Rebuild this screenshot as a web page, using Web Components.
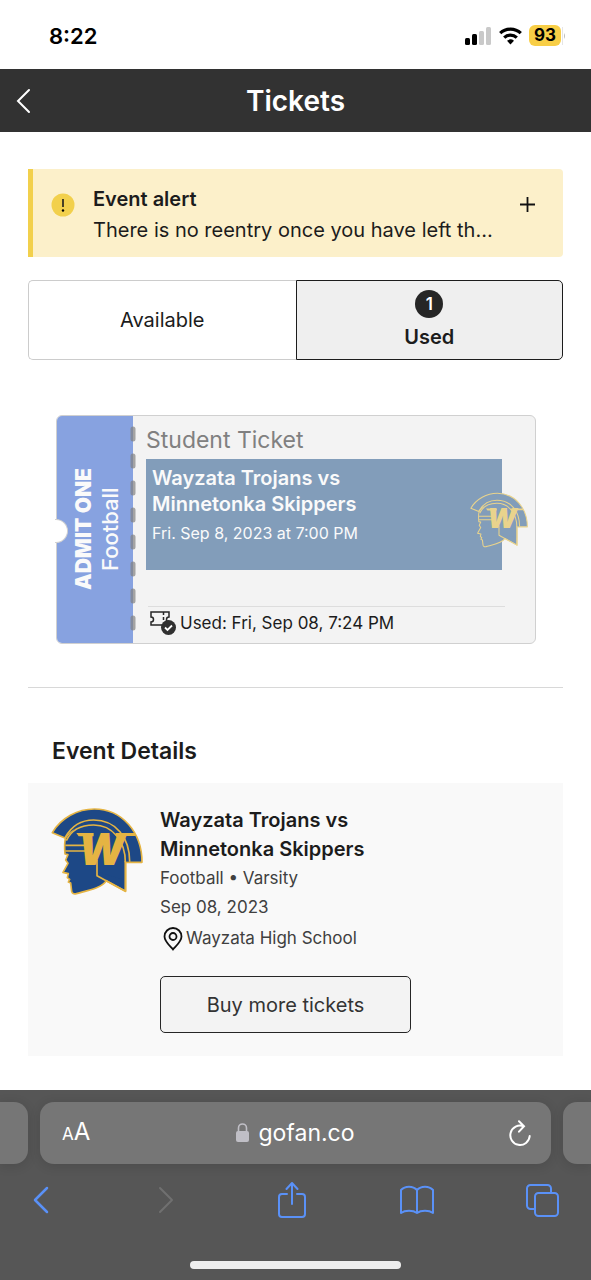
<!DOCTYPE html>
<html lang="en">
<head>
<meta charset="utf-8">
<meta name="viewport" content="width=device-width, initial-scale=1">
<title>Tickets</title>
<style>
body {
    margin: 0;
    background: #fff;
    color: #1c1c1c;
    font-family: Inter, "Liberation Sans", sans-serif;
}
main {
    padding: 37px 28px 34px;
}
hr {
    margin: 43px 0 49px;
    border: 0;
    border-top: 1px solid #d8d8d8;
}
h2 {
    margin: 0 24px 18px;
    font-size: 23px;
    line-height: 28px;
    font-weight: 600;
}
</style>
</head>
<body>
<status-bar time="8:22" battery="93"></status-bar>
<page-header>Tickets</page-header>
<main>
    <event-alert heading="Event alert">There is no reentry once you have left th…</event-alert>
    <ticket-tabs></ticket-tabs>
    <admit-ticket sport="Football">
        <span slot="type">Student Ticket</span>
        <span slot="title">Wayzata Trojans vs<br>Minnetonka Skippers</span>
        <span slot="date">Fri. Sep 8, 2023 at 7:00 PM</span>
        <span slot="used">Used: Fri, Sep 08, 7:24 PM</span>
    </admit-ticket>
    <hr>
    <h2>Event Details</h2>
    <event-card>
        <span slot="title">Wayzata Trojans vs<br>Minnetonka Skippers</span>
        <span slot="level">Football • Varsity</span>
        <span slot="date">Sep 08, 2023</span>
        <span slot="venue">Wayzata High School</span>
    </event-card>
</main>
<browser-bar>gofan.co</browser-bar>

<script>
// attach an open shadow root with the given markup
class BaseElement extends HTMLElement {
    connectedCallback() {
        if (this.shadowRoot) return;
        const template = document.createElement('template');
        template.innerHTML = BaseElement.reset + this.render();
        this.attachShadow({ mode: 'open' });
        this.shadowRoot.appendChild(template.content.cloneNode(true));
    }
}

BaseElement.reset = `<style>
* { box-sizing: border-box; }
:host { display: block; box-sizing: border-box; }
svg { display: block; flex: none; }
button {
    margin: 0;
    padding: 0;
    border: 0;
    background: none;
    color: inherit;
    font: inherit;
    cursor: pointer;
}
</style>`;

class StatusBar extends BaseElement {
    render() {
        return `<style>
:host {
    display: flex;
    align-items: center;
    justify-content: space-between;
    height: 69px;
    padding: 2px 25px 0 49px;
    color: #000;
}
.time { font-size: 22px; line-height: 28px; font-weight: 600; }
.icons { display: flex; align-items: center; gap: 7px; }
.battery { display: flex; align-items: center; gap: 1px; }
.level {
    padding: 0 5px;
    border-radius: 6px;
    background: #f8ce46;
    font-size: 17px;
    line-height: 21px;
    font-weight: 700;
}
</style>
<span class="time">${this.getAttribute('time')}</span>
<div class="icons">
    <svg width="27" height="19" viewBox="0 0 27 19">
        <rect x="0" y="12" width="5" height="7" rx="1.5"/>
        <rect x="7" y="8" width="5" height="11" rx="1.5"/>
        <g fill="#c9c9c9"><rect x="14" y="5" width="5" height="14" rx="1.5"/><rect x="21" y="1" width="5" height="18" rx="1.5"/></g>
    </svg>
    <svg width="23" height="18" viewBox="0 0 23 18">
        <g fill="none" stroke="#000" stroke-width="3.2">
            <path d="M1.2 6.2a15 15 0 0 1 20.6 0"/>
            <path d="M5.2 10.6a9.2 9.2 0 0 1 12.6 0"/>
        </g>
        <path d="M8 13.8a5.5 5.5 0 0 1 7 0L11.500 17.600z"/>
    </svg>
    <div class="battery">
        <span class="level">${this.getAttribute('battery')}</span>
        <svg width="4" height="20" viewBox="0 0 4 20"><path d="M0 1v18" stroke="#ccc"/><path d="M2 7q2 3 0 6z" fill="#bbb"/></svg>
    </div>
</div>`;
    }
}
customElements.define('status-bar', StatusBar);

class PageHeader extends BaseElement {
    render() {
        return `<style>
:host {
    display: grid;
    grid-template-columns: 48px 1fr 48px;
    align-items: center;
    height: 63px;
    background: #323232;
    color: #fff;
}
button { display: flex; align-items: center; height: 63px; padding-left: 16px; }
h1 { margin: 0; font-size: 28px; line-height: 34px; font-weight: 600; text-align: center; }
</style>
<button aria-label="Back">
    <svg width="15" height="26" viewBox="0 0 15 26" fill="none" stroke="#fff" stroke-width="2" stroke-linecap="round"><path d="M13 2L2 13l11 11"/></svg>
</button>
<h1><slot></slot></h1>`;
    }
}
customElements.define('page-header', PageHeader);

class EventAlert extends BaseElement {
    render() {
        return `<style>
:host {
    display: flex;
    align-items: flex-start;
    padding: 15px 28px 11px 18px;
    border-left: 5px solid #f2d04c;
    border-radius: 0 4px 4px 0;
    background: #fcf0ca;
}
.icon { margin-top: 9px; }
.text { flex: 1; min-width: 0; margin-left: 18px; font-size: 20px; line-height: 31px; }
.heading { font-weight: 600; }
.message { overflow: hidden; white-space: nowrap; text-overflow: ellipsis; }
button { margin-top: 13px; }
</style>
<svg class="icon" width="24" height="24" viewBox="0 0 24 24">
    <circle cx="12" cy="12" r="11.500" fill="#f2d04c"/>
    <path d="M12 6v8" stroke="#1c1c1c" stroke-width="1.600"/><circle cx="12" cy="17.500" r="1.200"/>
</svg>
<div class="text">
    <div class="heading">${this.getAttribute('heading')}</div>
    <div class="message"><slot></slot></div>
</div>
<button aria-label="Expand alert">
    <svg width="15" height="15" viewBox="0 0 15 15" stroke="#111" stroke-width="1.800"><path d="M7.500 0v15M0 7.500h15"/></svg>
</button>`;
    }
}
customElements.define('event-alert', EventAlert);

class TicketTabs extends BaseElement {
    render() {
        return `<style>
:host {
    display: grid;
    grid-template-columns: 1fr 1fr;
    margin-top: 23px;
    font-size: 20px;
    line-height: 26px;
}
button {
    display: flex;
    flex-direction: column;
    align-items: center;
    justify-content: center;
    gap: 6px;
    height: 80px;
    border: 1px solid #ccc;
    border-right: 0;
    border-radius: 5px 0 0 5px;
    background: #fff;
}
button[aria-selected="true"] {
    border: 1px solid #1c1c1c;
    border-radius: 0 5px 5px 0;
    background: #efefef;
    font-weight: 600;
}
.count {
    width: 28px;
    border-radius: 50%;
    background: #262626;
    color: #fff;
    font-size: 17px;
    line-height: 28px;
}
</style>
<button role="tab" aria-selected="false">Available</button>
<button role="tab" aria-selected="true"><span class="count">1</span><span>Used</span></button>`;
    }

    connectedCallback() {
        super.connectedCallback();
        this.setAttribute('role', 'tablist');
    }
}
customElements.define('ticket-tabs', TicketTabs);

// Trojan head with the school initial
class TeamLogo extends BaseElement {
    render() {
        return `<style>
:host { width: 92px; }
svg { width: 100%; height: auto; }
.fill, .body { fill: var(--logo-fill, #1d4886); }
.line { fill: none; }
.body, .line { stroke: var(--logo-line, #e5b443); stroke-width: 5; stroke-linejoin: round; }
text, .bar { fill: var(--logo-line, #e5b443); }
text { font: italic 900 130px Inter, sans-serif; }
</style>
<svg viewBox="18 21 276 267" role="img" aria-label="Wayzata Trojans">
    <path class="body" d="M62 112C82 84 110 70 146 70C204 70 242 118 242 187V274L184 242C172 264 126 272 94 281Q82 284 80 274L77 249L70 246L74 238L67 233L70 221L54 217L69 190L62 180L69 164L60 162Q57 130 62 112z"/>
    <path class="body" d="M22 98C48 54 98 27 148 27C232 27 291 98 291 187H242L148 75C106 75 80 90 60 114z"/>
    <path class="fill" d="M63 118C78 90 108 66 146 66C210 66 252 118 252 184H238V240L160 215L64 150z"/>
    <path class="line" d="M60 113C78 80 108 60 146 60C212 60 254 112 254 185M64 122C78 92 108 75 146 75C203 75 241 124 241 187V274L156 227V180M61 136H122M61 153H122"/>
    <text x="100" y="194">W</text>
    <path class="bar" d="M94 99h52v10H101zM212 99h58v9h-58z"/>
</svg>`;
    }
}
customElements.define('team-logo', TeamLogo);

class AdmitTicket extends BaseElement {
    render() {
        return `<style>
:host {
    display: flex;
    position: relative;
    margin: 55px 27px 0 28px;
    border: 1px solid #d0d0d0;
    border-radius: 6px;
    background: #f3f3f3;
}
/* turned by 180deg, so right here is the ticket's left side */
.stub {
    display: flex;
    flex-direction: column-reverse;
    align-items: center;
    justify-content: center;
    width: 76px;
    padding-right: 3px;
    border-radius: 0 5px 5px 0;
    background: #87a2e0;
    color: #fafafa;
    writing-mode: vertical-rl;
    transform: rotate(180deg);
    line-height: 26px;
}
.admit { font-size: 21px; font-weight: 900; }
.sport { font-size: 22px; font-weight: 500; }
/* half circle punched out of the left edge */
.notch {
    position: absolute;
    left: -2px;
    top: 50%;
    width: 13px;
    height: 24px;
    margin-top: -11px;
    border: 1px solid #d0d0d0;
    border-left: 0;
    border-radius: 0 12px 12px 0;
    background: #fff;
}
.tear {
    position: absolute;
    left: 73px;
    top: 10px;
    bottom: 10px;
}
.info { flex: 1; min-width: 0; padding: 8px 30px 6px 13px; }
.type { color: #808080; font-size: 23px; line-height: 32px; }
.banner {
    position: relative;
    height: 111px;
    margin-top: 3px;
    margin-right: 3px;
    padding: 6px;
    background: #829dba;
    color: #fafafa;
}
.title { font-size: 20px; line-height: 26px; font-weight: 600; }
.date { margin-top: 3px; font-size: 16px; line-height: 26px; }
team-logo {
    --logo-fill: #829dba;
    --logo-line: #e9d38c;
    position: absolute;
    right: -26px;
    top: 33px;
    width: 58px;
}
.used {
    display: flex;
    align-items: center;
    gap: 4px;
    margin: 36px 0 0 2px;
    padding: 3px 0 1px 2px;
    border-top: 1px solid #ddd;
    font-size: 17px;
    line-height: 26px;
}
</style>
<div class="stub">
    <div class="sport">${this.getAttribute('sport')}</div>
    <div class="admit">ADMIT ONE</div>
</div>
<div class="notch"></div>
<svg class="tear" width="6" height="207" viewBox="0 0 6 207"><path d="M3 3v201" stroke="#808080" stroke-opacity=".7" stroke-width="5" stroke-linecap="round" stroke-dasharray="10 17"/></svg>
<div class="info">
    <div class="type"><slot name="type"></slot></div>
    <div class="banner">
        <div class="title"><slot name="title"></slot></div>
        <div class="date"><slot name="date"></slot></div>
        <team-logo></team-logo>
    </div>
    <div class="used">
        <svg width="26" height="24" viewBox="0 0 26 24">
            <path d="M1 1h18v5a2.500 2.500 0 0 0 0 5v3H1v-3a2.500 2.500 0 0 0 0-5zM13.500 1v3M13.500 6v3" fill="none" stroke="#262626" stroke-width="1.500"/>
            <circle cx="18.500" cy="16.500" r="7.500" fill="#303030"/>
            <path d="M15 16.500l2.500 2.500 4.500-4.500" fill="none" stroke="#fff" stroke-width="1.800"/>
        </svg>
        <slot name="used"></slot>
    </div>
</div>`;
    }
}
customElements.define('admit-ticket', AdmitTicket);

class EventCard extends BaseElement {
    render() {
        return `<style>
:host {
    display: flex;
    align-items: flex-start;
    gap: 17px;
    padding: 23px;
    background: #f9f9f9;
}
team-logo { margin-top: 1px; }
.title { font-size: 20px; line-height: 29px; font-weight: 600; }
.line { color: #404040; font-size: 17px; line-height: 29px; }
.venue { display: flex; align-items: center; gap: 3px; margin-top: 2px; padding-left: 3px; }
button {
    width: 251px;
    height: 57px;
    margin-top: 23px;
    border: 1px solid #262626;
    border-radius: 5px;
    background: #f3f3f3;
    color: #333;
    font-size: 20px;
}
</style>
<team-logo></team-logo>
<div>
    <div class="title"><slot name="title"></slot></div>
    <div class="line"><slot name="level"></slot></div>
    <div class="line"><slot name="date"></slot></div>
    <div class="line venue">
        <svg width="20" height="24" viewBox="0 0 20 24" fill="none" stroke="#111" stroke-width="1.800"><path d="M10 22.500C7 19 1.500 14.500 1.500 9.500a8.500 8.500 0 0 1 17 0c0 5-5.500 9.500-8.500 13z"/><circle cx="10" cy="9.500" r="3.500"/></svg>
        <slot name="venue"></slot>
    </div>
    <button>Buy more tickets</button>
</div>`;
    }
}
customElements.define('event-card', EventCard);

class BrowserBar extends BaseElement {
    render() {
        return `<style>
:host {
    height: 190px;
    padding-top: 12px;
    overflow: hidden;
    background: #565656;
    color: #fff;
}
.tabs { display: grid; grid-template-columns: 28px 1fr 28px; gap: 12px; }
.tab {
    height: 62px;
    border-radius: 14px;
    background: #767676;
    box-shadow: 0 2px 12px rgba(0, 0, 0, .12);
}
.prev { border-radius: 0 14px 14px 0; }
.next { border-radius: 14px 0 0 14px; }
.current {
    display: grid;
    grid-template-columns: 60px 1fr 60px;
    align-items: center;
    padding: 0 20px;
}
.size { display: flex; align-items: baseline; padding-left: 2px; font-size: 17px; line-height: 30px; }
.size span { font-size: 24px; }
.address { display: flex; align-items: center; justify-content: center; gap: 9px; font-size: 23px; line-height: 30px; }
.reload { justify-self: end; }
nav { display: flex; justify-content: space-between; align-items: center; height: 36px; margin: 18px 32px 0 24px; color: #5a91f7; }
nav button { display: flex; justify-content: center; width: 34px; }
nav button[disabled] { color: #707070; }
nav svg { fill: none; stroke: currentColor; stroke-width: 2; stroke-linecap: round; stroke-linejoin: round; }
.home { width: 211px; height: 8px; margin: 43px auto 0; border-radius: 4px; background: #eee; }
</style>
<div class="tabs">
    <div class="tab prev"></div>
    <div class="tab current">
        <button class="size" aria-label="Page settings">A<span>A</span></button>
        <button class="address">
            <svg width="13" height="20" viewBox="0 0 13 20"><rect y="8" width="13" height="11" rx="2" fill="#c0bfc6"/><path d="M2.500 9V5a4 4 0 0 1 8 0v4" fill="none" stroke="#c0bfc6" stroke-width="1.600"/></svg>
            <slot></slot>
        </button>
        <button class="reload" aria-label="Reload">
            <svg width="22" height="27" viewBox="0 0 22 27" fill="none" stroke="#fff" stroke-width="2" stroke-linecap="round"><path d="M14.500 6.200A9.700 9.700 0 1 0 20.700 16M10 1.200l5 5-5 5.500"/></svg>
        </button>
    </div>
    <div class="tab next"></div>
</div>
<nav>
    <button aria-label="Back"><svg width="16" height="28" viewBox="0 0 16 28"><path d="M14 2L2 14l12 12" stroke-width="2.500"/></svg></button>
    <button aria-label="Forward" disabled><svg width="16" height="28" viewBox="0 0 16 28"><path d="M2 2l12 12L2 26"/></svg></button>
    <button aria-label="Share"><svg width="28" height="36" viewBox="0 0 28 36"><path d="M9 12H4a3 3 0 0 0-3 3v17a3 3 0 0 0 3 3h20a3 3 0 0 0 3-3V15a3 3 0 0 0-3-3h-5M14 22V1M8.500 7L14 1l5.500 6"/></svg></button>
    <button aria-label="Bookmarks"><svg width="34" height="30" viewBox="0 0 34 30"><path d="M17 5C13 .5 5 .5 1 5v23c4-3 12-3 16 0 4-3 12-3 16 0V5C29 .5 21 .5 17 5zM17 5v23"/></svg></button>
    <button aria-label="Tabs"><svg width="33" height="33" viewBox="0 0 33 33"><rect x="9" y="9" width="23" height="23" rx="3.500"/><path d="M9 25H4.500A3.500 3.500 0 0 1 1 21.500v-17A3.500 3.500 0 0 1 4.500 1h17A3.500 3.500 0 0 1 25 4.500V9"/></svg></button>
</nav>
<div class="home"></div>`;
    }
}
customElements.define('browser-bar', BrowserBar);
</script>
</body>
</html>
